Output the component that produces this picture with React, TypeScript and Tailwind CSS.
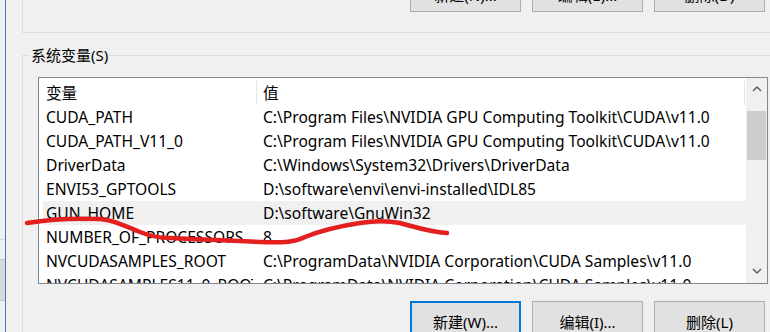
import React from "react";

const rows: { name: string; value: string; hl?: boolean }[] = [
  { name: "CUDA_PATH", value: "C:\\Program Files\\NVIDIA GPU Computing Toolkit\\CUDA\\v11.0" },
  { name: "CUDA_PATH_V11_0", value: "C:\\Program Files\\NVIDIA GPU Computing Toolkit\\CUDA\\v11.0" },
  { name: "DriverData", value: "C:\\Windows\\System32\\Drivers\\DriverData" },
  { name: "ENVI53_GPTOOLS", value: "D:\\software\\envi\\envi-installed\\IDL85" },
  { name: "GUN_HOME", value: "D:\\software\\GnuWin32", hl: true },
  { name: "NUMBER_OF_PROCESSORS", value: "8" },
  { name: "NVCUDASAMPLES_ROOT", value: "C:\\ProgramData\\NVIDIA Corporation\\CUDA Samples\\v11.0" },
  { name: "NVCUDASAMPLES11_0_ROOT", value: "C:\\ProgramData\\NVIDIA Corporation\\CUDA Samples\\v11.0" },
];

function Btn({ label, focused }: { label: string; focused?: boolean }) {
  return (
    <div
      className={
        "w-[111px] h-[38px] shrink-0 flex items-center justify-center pt-[4px] bg-[#e1e1e1] text-black " +
        (focused ? "border-2 border-[#0078d7]" : "border border-[#adadad]")
      }
    >
      {label}
    </div>
  );
}

export default function App() {
  return (
    <div
      className="relative w-[770px] h-[332px] overflow-hidden bg-[#f0f0f0] flex text-[15px] leading-[20px] text-black"
      style={{ fontFamily: '"Noto Sans", "Noto Sans CJK SC", sans-serif' }}
    >
      {/* left strip of window behind */}
      <div className="w-[5px] shrink-0 flex flex-col bg-[#f0f0f0]">
        <div className="h-[239px] shrink-0" />
        <div className="h-px shrink-0 bg-[#d6d6d6]" />
        <div className="h-[19px] shrink-0" />
        <div className="h-[42px] shrink-0 bg-[#d9d9d9] border-t border-b border-[#c4c4c4]" />
      </div>
      <div className="w-[1px] shrink-0 bg-[#3d7cb8]" />

      <div className="flex-1 pl-[16px] flex flex-col">
        {/* upper group (user variables) bottom part */}
        <div className="h-[33px] shrink-0 border-l border-b border-[#dcdcdc] flex justify-end pr-[5px]">
          <div className="-mt-[26px] flex gap-[11px]">
            <Btn label="新建(N)..." />
            <Btn label="编辑(E)..." />
            <Btn label="删除(D)" />
          </div>
        </div>

        {/* system variables group */}
        <fieldset className="mt-[12px] shrink-0 h-[300px] border-l border-t border-[#dcdcdc] pl-[15px] min-w-0">
          <legend className="-ml-[8px] px-[1px] leading-[20px]">系统变量(S)</legend>
          <div className="mt-[12px] w-[730px] h-[207px] border border-[#828790] bg-white flex">
            <div className="flex-1 flex flex-col overflow-hidden text-[15.6px]">
              <div className="h-[27px] flex shrink-0 pt-[3px]">
                <div className="w-[218px] border-r border-[#e5e5e5] pl-[7px] flex items-center">变量</div>
                <div className="flex-1 pl-[6px] flex items-center border-r border-[#e5e5e5] mr-[1px]">值</div>
              </div>
              {rows.map((r) => (
                <div key={r.name} className="h-[24px] shrink-0 flex pl-[4px]">
                  <div className={"flex-1 flex items-center whitespace-nowrap " + (r.hl ? "bg-[#f0f0f0]" : "")}>
                    <div className="w-[210px] mr-[4px] pl-[3px] shrink-0 overflow-hidden">{r.name}</div>
                    <div className="pl-[6px]">{r.value}</div>
                  </div>
                </div>
              ))}
            </div>
            {/* scrollbar */}
            <div className="w-[21px] shrink-0 bg-[#f0f0f0] flex flex-col items-center">
              <div className="h-[24px] w-full flex items-center justify-center -mt-[1px]">
                <svg width="10" height="6" viewBox="0 0 10 6">
                  <path d="M1 5 L5 1 L9 5" fill="none" stroke="#606060" strokeWidth="1.5" />
                </svg>
              </div>
              <div className="h-[10px]" />
              <div className="w-[19px] h-[49px] bg-[#cdcdcd]" />
              <div className="flex-1" />
              <div className="h-[25px] w-full flex items-center justify-center">
                <svg width="10" height="6" viewBox="0 0 10 6">
                  <path d="M1 1 L5 5 L9 1" fill="none" stroke="#606060" strokeWidth="1.5" />
                </svg>
              </div>
            </div>
          </div>
          <div className="mt-[17px] flex justify-end gap-[11px] pr-[5px]">
            <Btn label="新建(W)..." focused />
            <Btn label="编辑(I)..." />
            <Btn label="删除(L)" />
          </div>
        </fieldset>
      </div>

      {/* red annotation stroke */}
      <svg className="absolute left-0 top-0 pointer-events-none" width="770" height="332" viewBox="0 0 770 332">
        <path
          d="M27 223 C 45 220, 75 218, 100 219 C 112 220, 120 224, 140 232 C 150 236, 158 238, 170 238 L 260 242 C 285 243, 295 242, 305 237 C 320 231, 340 226, 360 223 C 372 221, 385 220, 400 223 C 415 227, 430 232, 447 233"
          fill="none"
          stroke="#e3201f"
          strokeWidth="4.5"
          strokeLinecap="round"
          strokeLinejoin="round"
        />
      </svg>
    </div>
  );
}
